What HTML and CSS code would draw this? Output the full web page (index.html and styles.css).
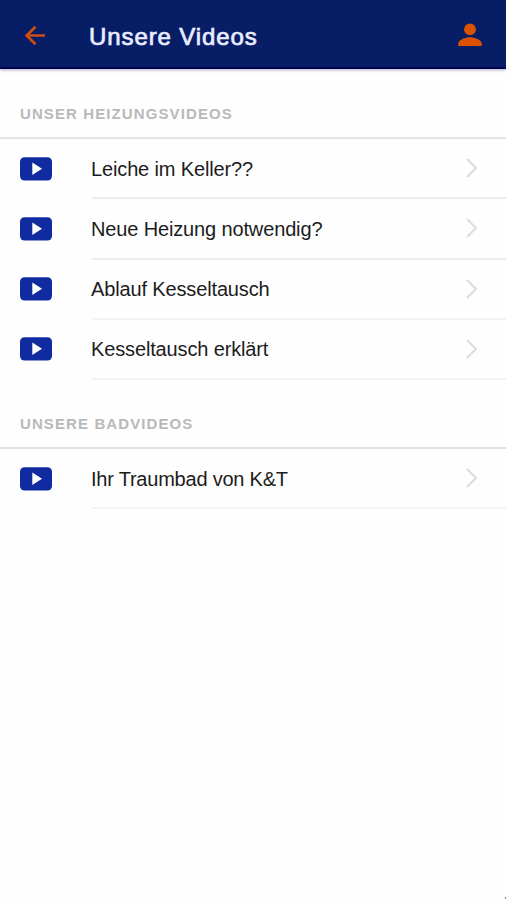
FILE: index.html
```html
<!DOCTYPE html>
<html lang="de">
<head>
<meta charset="utf-8">
<title>Unsere Videos</title>
<link rel="stylesheet" href="styles.css">
</head>
<body>
<svg width="0" height="0" class="defs">
  <symbol id="play" viewBox="0 0 32 24"><rect y=".3" width="32" height="23.200" rx="4.500" fill="#102b9f"/><path d="M12.300 5.500v12.400L22 11.700z" fill="#fff"/></symbol>
  <symbol id="chevron" viewBox="0 0 14 22"><path d="M2 2l9 9-9 9" fill="none" stroke="#dcdcdc" stroke-width="2"/></symbol>
</svg>
<header class="bar">
  <svg class="back" viewBox="0 0 22 22"><path d="M21 11H2M11 1.800L1.800 11l9.200 9.200" fill="none" stroke="#cf4c10" stroke-width="2.800"/></svg>
  <h1 class="title"><span>Unsere Videos</span></h1>
  <svg class="user" viewBox="0 0 24 24"><circle cx="12" cy="6.400" r="5.900" fill="#dc5203"/><path d="M.3 23v-2.300C.3 17 7.500 14.300 12 14.300S23.700 17 23.700 20.700V23z" fill="#dc5203"/></svg>
</header>
<main>
  <section>
    <h2 class="label">UNSER HEIZUNGSVIDEOS</h2>
    <ul class="list">
      <li class="row"><svg class="play"><use href="#play"/></svg><div class="item"><span class="name">Leiche im Keller??</span><svg class="chevron"><use href="#chevron"/></svg></div></li>
      <li class="row"><svg class="play"><use href="#play"/></svg><div class="item"><span class="name">Neue Heizung notwendig?</span><svg class="chevron"><use href="#chevron"/></svg></div></li>
      <li class="row"><svg class="play"><use href="#play"/></svg><div class="item faint"><span class="name">Ablauf Kesseltausch</span><svg class="chevron"><use href="#chevron"/></svg></div></li>
      <li class="row"><svg class="play"><use href="#play"/></svg><div class="item faint"><span class="name">Kesseltausch erklärt</span><svg class="chevron"><use href="#chevron"/></svg></div></li>
    </ul>
  </section>
  <section>
    <h2 class="label second">UNSERE BADVIDEOS</h2>
    <ul class="list">
      <li class="row"><svg class="play"><use href="#play"/></svg><div class="item faint"><span class="name tight">Ihr Traumbad von K&amp;T</span><svg class="chevron"><use href="#chevron"/></svg></div></li>
    </ul>
  </section>
</main>
</body>
</html>
```
FILE: styles.css
```css
* { box-sizing: border-box; }
body { position: relative; margin: 0; min-height: 900px; background: #fefefe; font-family: "Liberation Sans", Arial, sans-serif; color: #1c1c1c; }
body::after { content: ""; position: absolute; right: 0; bottom: 1px; width: 1px; height: 2px; background: #888; }
.defs { display: block; height: 0; }
.bar { display: flex; align-items: center; height: 69px; padding: 3px 24px 0 25px; background: #071e67; border-bottom: 2px solid #03064f; box-shadow: 0 1px 3px rgba(20, 10, 70, .35); }
.back { width: 21px; height: 21px; }
.title { flex: 1; margin: 3px 0 0 43px; font-size: 24px; line-height: 28px; font-weight: 400; color: #e9edff; -webkit-text-stroke: .7px #e9edff; letter-spacing: .9px; }
.user { width: 24px; height: 24px; }
.label { display: flex; align-items: flex-end; height: 70px; margin: 0; padding: 0 20px 14px; border-bottom: 2px solid #e4e4e4; font-size: 15px; line-height: 18px; font-weight: 700; letter-spacing: 1.1px; color: #b9b9b9; }
.second { height: 69px; border-bottom-color: #dedede; }
.list { list-style: none; margin: 0; padding: 0; }
.row { display: flex; align-items: center; height: 60.25px; padding-left: 20px; }
.play { width: 32px; height: 24px; margin: 0 40px 1px 0; }
.item { flex: 1; display: flex; align-items: center; justify-content: space-between; height: 100%; padding-right: 27px; border-bottom: 2px solid #ececec; font-size: 20px; }
.faint { border-bottom-color: #f3f3f3; }
.name { margin: 2px 0 0 -1px; letter-spacing: -.14px; }
.tight { letter-spacing: -.22px; }
.chevron { width: 14px; height: 22px; }
```
